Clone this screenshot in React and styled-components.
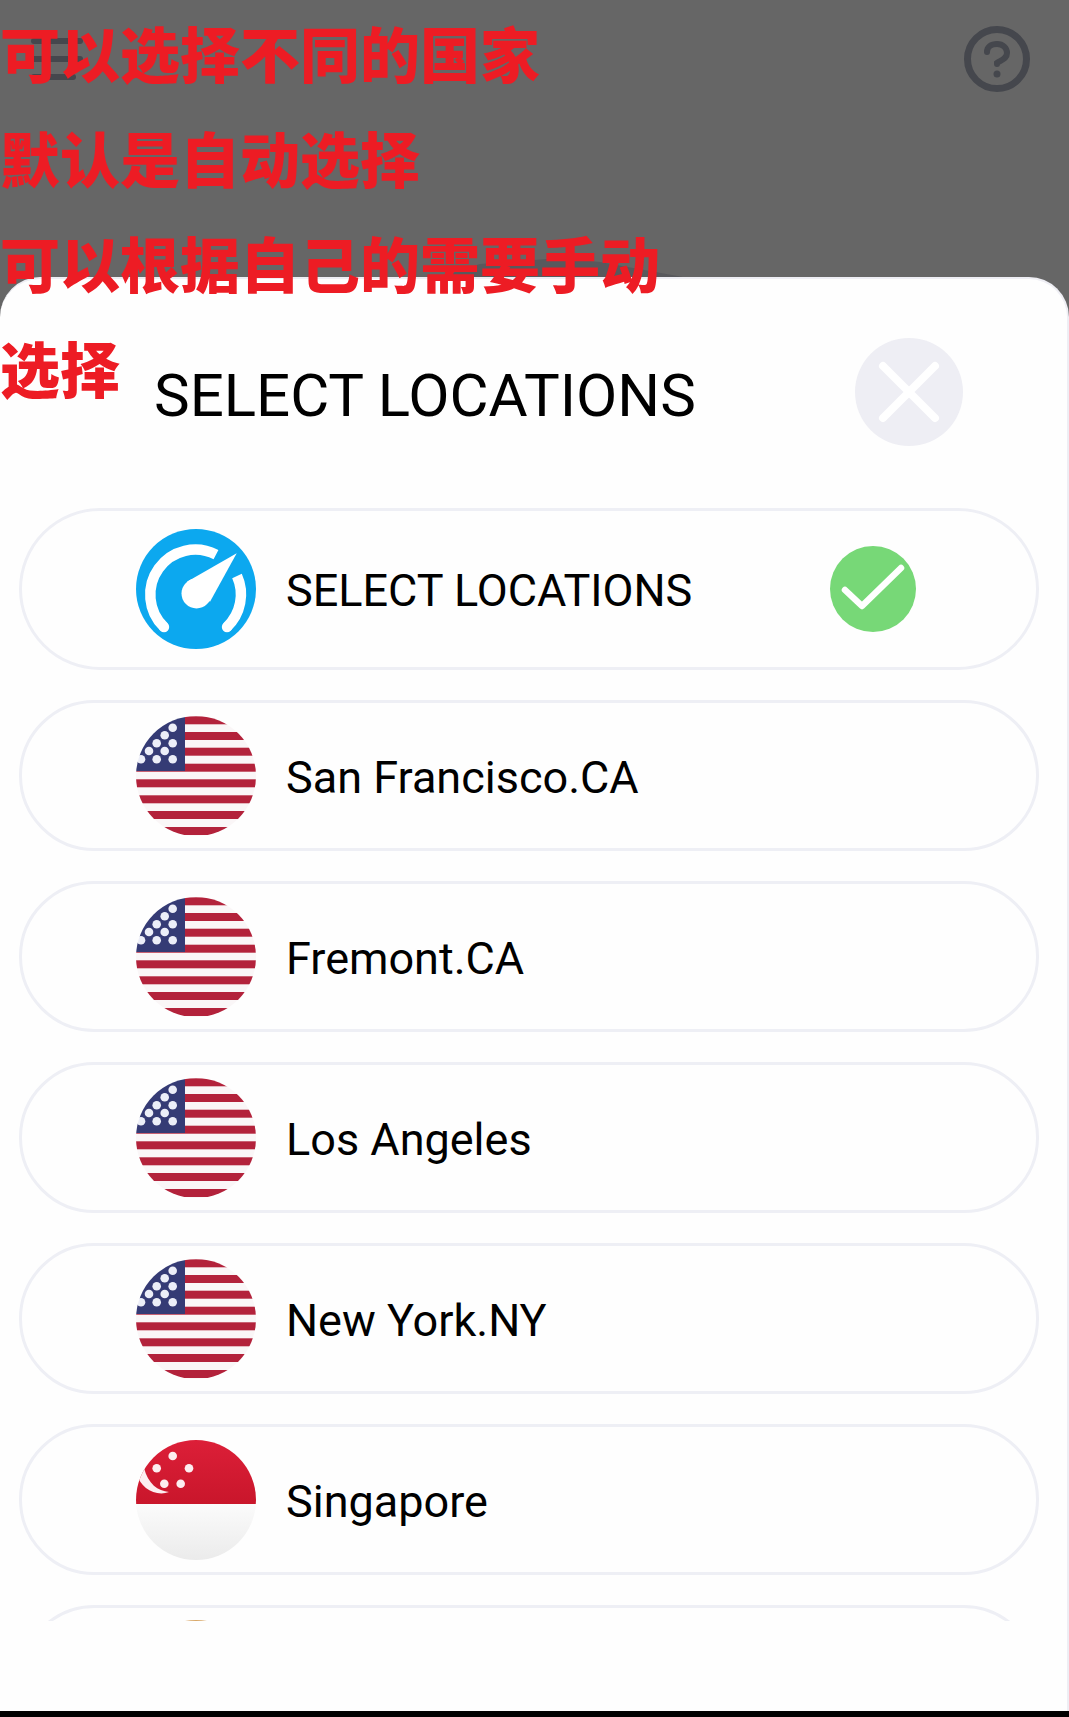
import React from 'react'
import styled, { createGlobalStyle } from 'styled-components'

const GlobalStyle = createGlobalStyle`
  html, body {
    margin: 0;
    padding: 0;
    background: #000;
  }
  body {
    font-family: Roboto, "Noto Sans CJK SC", sans-serif;
  }
`

const locations = [
  { id: 'auto', name: 'SELECT LOCATIONS', icon: 'auto', active: true },
  { id: 'sf', name: 'San Francisco.CA', icon: 'us' },
  { id: 'fremont', name: 'Fremont.CA', icon: 'us' },
  { id: 'la', name: 'Los Angeles', icon: 'us' },
  { id: 'ny', name: 'New York.NY', icon: 'us' },
  { id: 'sg', name: 'Singapore', icon: 'sg' },
  { id: 'next', name: '', icon: 'other' },
]

const notes = ['可以选择不同的国家', '默认是自动选择', '可以根据自己的需要手动选择']

const redStripes = [4.3, 20, 35.7, 51.7, 67.3, 83.3, 99, 115]
const stars = [[36.7, 11.7], [28.7, 19.3], [36.7, 27.3], [20.7, 27.3], [13, 35], [28.7, 35], [5, 43.3], [20.7, 43.3], [36.7, 43.3]]
const sgStars = [[36.7, 16], [20.7, 28.3], [53, 28.3], [28.3, 43.7], [44.7, 43.7]]

const UsFlag = () => (
  <RoundIcon viewBox="0 0 120 120">
    <g filter="url(#soft)">
      <rect x="-6" y="-6" width="132" height="132" fill="#faf6f7" />
      {redStripes.map((y) => (
        <rect key={y} x="-6" y={y - 4} width="132" height="8" fill="#b3243b" />
      ))}
      <rect x="-6" y="-6" width="55" height="61" fill="#363a74" />
      {stars.map(([x, y]) => (
        <circle key={`${x}-${y}`} cx={x} cy={y} r="4.3" fill="#eceef8" />
      ))}
    </g>
  </RoundIcon>
)

const SgFlag = () => (
  <RoundIcon viewBox="0 0 120 120">
    <defs>
      <linearGradient id="sgRed" x1="0" y1="0" x2="0" y2="1">
        <stop offset="0" stopColor="#dc1f38" />
        <stop offset="1" stopColor="#c9162b" />
      </linearGradient>
      <linearGradient id="sgWhite" x1="0" y1="0" x2="0" y2="1">
        <stop offset="0" stopColor="#fbfbfb" />
        <stop offset="1" stopColor="#ebebeb" />
      </linearGradient>
    </defs>
    <rect width="120" height="64" fill="url(#sgRed)" />
    <rect y="64" width="120" height="56" fill="url(#sgWhite)" />
    <g filter="url(#soft)">
      {sgStars.map(([x, y]) => (
        <circle key={`${x}-${y}`} cx={x} cy={y} r="4.3" fill="#fdeef0" />
      ))}
      <path d="M1 34C4 48 20 57 33 52C22 51 12 44 8 28Z" fill="#fdeef0" />
    </g>
  </RoundIcon>
)

const GaugeIcon = () => (
  <RoundIcon viewBox="0 0 120 120">
    <rect width="120" height="120" fill="#0ca8ef" />
    <path d="M28 98A45 45 0 0 1 80 25.7" fill="none" stroke="#fff" strokeWidth="10.5" />
    <path d="M101 47A45 45 0 0 1 91 98" fill="none" stroke="#fff" strokeWidth="10.5" />
    <circle cx="28" cy="98" r="5.2" fill="#fff" />
    <circle cx="91" cy="98" r="5.2" fill="#fff" />
    <circle cx="60.5" cy="64.5" r="15" fill="#fff" />
    <path d="M51 52.7L100.7 24.3L74 72.7Z" fill="#fff" />
  </RoundIcon>
)

const rowIcons = {
  auto: GaugeIcon,
  us: UsFlag,
  sg: SgFlag,
  other: () => <PlainDisc />,
}

const App = () => {
  return (
    <Screen>
      <GlobalStyle />
      <svg width="0" height="0" style={{ position: 'absolute' }}>
        <filter id="soft">
          <feGaussianBlur stdDeviation="0.7" />
        </filter>
      </svg>

      <Backdrop>
        <TopBar>
          <MenuIcon>
            <MenuLine />
            <MenuLine />
            <MenuLine $short />
          </MenuIcon>
          <svg width="66" height="66" viewBox="0 0 66 66" fill="none">
            <circle cx="33" cy="33" r="29.5" stroke="#45474d" strokeWidth="7" />
            <path d="M23 26C23 21 27 18 33 18C39 18 43 22 43 27C43 33 37 34 33 37V38" stroke="#45474d" strokeWidth="6" strokeLinecap="round" />
            <circle cx="33" cy="48" r="3.5" fill="#45474d" />
          </svg>
        </TopBar>
        <Hill viewBox="0 0 300 25">
          <path d="M0 25L40 12L120 6L160 10L243 25Z" fill="#58595d" />
        </Hill>
      </Backdrop>

      <Sheet>
        <SheetHeader>
          <SheetTitle>SELECT LOCATIONS</SheetTitle>
          <CloseButton>
            <svg width="64" height="64" viewBox="0 0 64 64">
              <path d="M6 6L58 58M58 6L6 58" stroke="#fff" strokeWidth="8" strokeLinecap="round" />
            </svg>
          </CloseButton>
        </SheetHeader>

        <LocationList>
          {locations.map((item) => {
            const Icon = rowIcons[item.icon]
            return (
              <LocationRow key={item.id} $active={item.active}>
                <Icon />
                {item.name && <LocationName>{item.name}</LocationName>}
                {item.active && (
                  <CheckBadge>
                    <svg width="86" height="86" viewBox="0 0 86 86" fill="none">
                      <path d="M15 44L32 60L71 22" stroke="#fff" strokeWidth="6.5" strokeLinecap="round" strokeLinejoin="round" />
                    </svg>
                  </CheckBadge>
                )}
              </LocationRow>
            )
          })}
        </LocationList>
      </Sheet>

      <BottomBar />

      <Note>
        {notes.map((line) => (
          <div key={line}>{line}</div>
        ))}
      </Note>
    </Screen>
  )
}

export default App

const Screen = styled.div`
  position: relative;
  width: 1069px;
  height: 1717px;
  display: flex;
  flex-direction: column;
  overflow: hidden;
  background: #666666;
`

const Backdrop = styled.div`
  position: relative;
  height: 277px;
  flex-shrink: 0;
`

const TopBar = styled.div`
  display: flex;
  align-items: flex-start;
  justify-content: space-between;
  padding: 26px 39px 0 31px;
`

const MenuIcon = styled.div`
  display: flex;
  flex-direction: column;
  gap: 12px;
  width: 52px;
  padding-top: 12px;
`

const MenuLine = styled.span`
  display: block;
  height: 6px;
  width: ${(p) => (p.$short ? '45px' : '52px')};
  border-radius: 3px;
  background: #45474d;
`

const Hill = styled.svg`
  position: absolute;
  left: 440px;
  bottom: 0;
  width: 300px;
  height: 25px;
`

const Sheet = styled.div`
  flex: 1;
  min-height: 0;
  display: flex;
  flex-direction: column;
  box-sizing: border-box;
  background: #fefefe;
  border: 2px solid #eeeef4;
  border-bottom: 0;
  border-left-width: 0;
  border-radius: 40px 40px 0 0;
`

const SheetHeader = styled.div`
  height: 229px;
  flex-shrink: 0;
  display: flex;
  align-items: center;
  justify-content: space-between;
  padding: 0 104px 0 154px;
  box-sizing: border-box;
`

const SheetTitle = styled.h1`
  margin: 4px 0 0;
  font-family: Roboto, sans-serif;
  font-size: 60px;
  font-weight: 400;
  color: #000;
`

const CloseButton = styled.div`
  width: 108px;
  height: 108px;
  margin-top: -3px;
  border-radius: 50%;
  background: #eeeef4;
  display: flex;
  align-items: center;
  justify-content: center;
`

const LocationList = styled.div`
  height: 1113px;
  flex-shrink: 0;
  overflow: hidden;
  display: flex;
  flex-direction: column;
  gap: 30px;
  padding: 0 28px 0 19px;
`

const LocationRow = styled.div`
  height: ${(p) => (p.$active ? '162px' : '151px')};
  flex-shrink: 0;
  box-sizing: border-box;
  display: flex;
  align-items: center;
  gap: 30px;
  padding: 0 120px 0 114px;
  border: 3px solid #eeeff5;
  border-radius: 81px;
`

const RoundIcon = styled.svg`
  width: 120px;
  height: 120px;
  flex-shrink: 0;
  border-radius: 50%;
`

const PlainDisc = styled.div`
  width: 120px;
  height: 120px;
  flex-shrink: 0;
  margin-top: -2px;
  border-radius: 50%;
  background: #d9a96a;
`

const LocationName = styled.span`
  flex: 1;
  padding-top: 3px;
  font-size: 45px;
  color: #000;
  white-space: nowrap;
`

const CheckBadge = styled.div`
  width: 86px;
  height: 86px;
  flex-shrink: 0;
  border-radius: 50%;
  background: #77d877;
`

const BottomBar = styled.div`
  height: 6px;
  flex-shrink: 0;
  background: #000;
`

const Note = styled.div`
  position: absolute;
  top: -1px;
  left: 0;
  width: 670px;
  font-family: "Noto Sans CJK SC", sans-serif;
  font-size: 60px;
  font-weight: 900;
  line-height: 105px;
  color: #ed1c24;
`
